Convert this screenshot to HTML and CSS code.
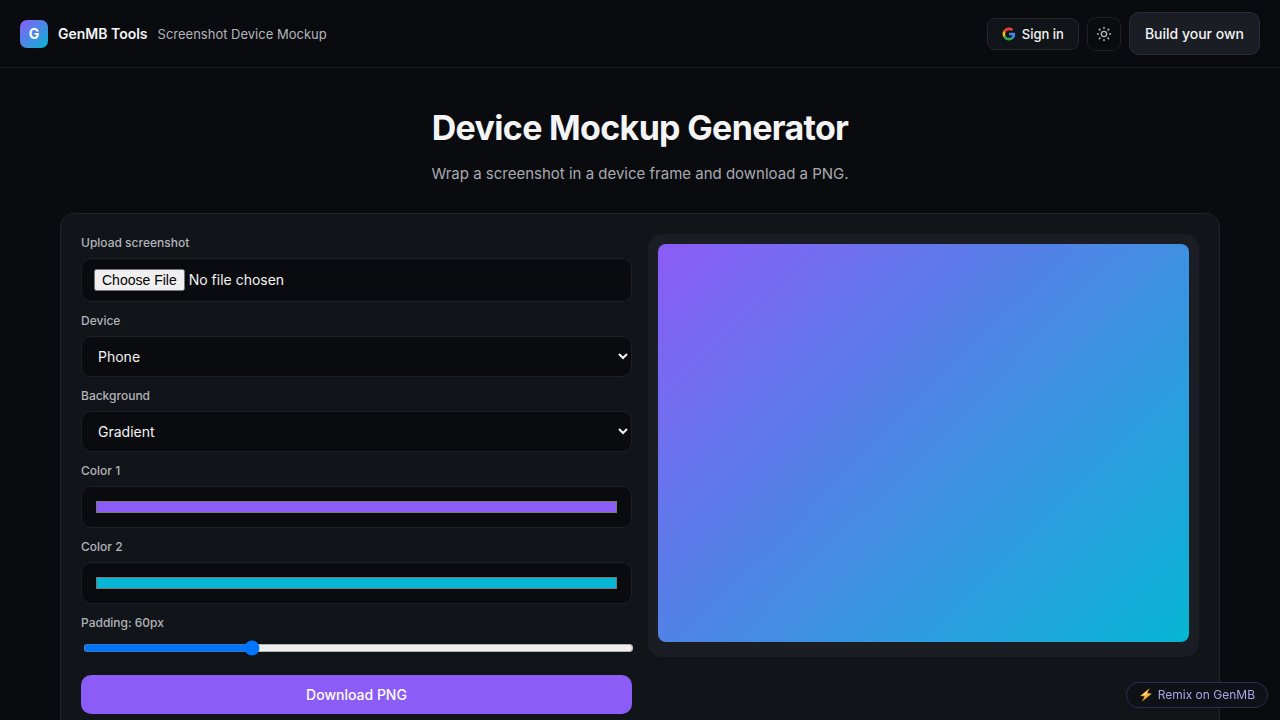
FILE: index.html
```html
<!DOCTYPE html>
<html lang="en">
<head>
    <meta charset="UTF-8">
    <meta name="viewport" content="width=device-width, initial-scale=1.0">
    <title>Device Mockup Generator</title>
    <link rel="stylesheet" href="styles.css">
</head>
<body>
    <header class="topbar">
        <div class="brand">
            <span class="logo">G</span>
            <span class="brand-name">GenMB Tools</span>
            <span class="tool-name">Screenshot Device Mockup</span>
        </div>
        <div class="actions">
            <button type="button" class="sign-in">
                <svg width="14" height="14" viewBox="0 0 24 24" aria-hidden="true">
                    <path fill="#4285F4" d="M22.56 12.25c0-.78-.07-1.53-.2-2.25H12v4.26h5.92c-.26 1.37-1.04 2.53-2.21 3.31v2.77h3.57c2.08-1.92 3.28-4.74 3.28-8.09z"/>
                    <path fill="#34A853" d="M12 23c2.97 0 5.46-.98 7.28-2.66l-3.57-2.77c-.98.66-2.23 1.06-3.71 1.06-2.86 0-5.29-1.93-6.16-4.53H2.18v2.84C3.99 20.53 7.7 23 12 23z"/>
                    <path fill="#FBBC05" d="M5.84 14.09c-.22-.66-.35-1.36-.35-2.09s.13-1.43.35-2.09V7.07H2.18C1.43 8.55 1 10.22 1 12s.43 3.45 1.18 4.93l3.66-2.84z"/>
                    <path fill="#EA4335" d="M12 5.38c1.62 0 3.06.56 4.21 1.64l3.15-3.15C17.45 2.09 14.97 1 12 1 7.7 1 3.99 3.47 2.18 7.07l3.66 2.84c.87-2.6 3.3-4.53 6.16-4.53z"/>
                </svg>
                Sign in
            </button>
            <button type="button" class="theme-toggle" aria-label="Toggle theme">
                <svg width="16" height="16" viewBox="0 0 16 16" fill="none" stroke="currentColor" aria-hidden="true">
                    <circle cx="8" cy="8" r="2.6" stroke-width="1.4"/>
                    <path stroke-width="1.6" stroke-linecap="round" d="M8 1.5v.7M8 13.8v.7M1.5 8h.7M13.8 8h.7M3.4 3.4l.5.5M12.1 12.1l.5.5M3.4 12.6l.5-.5M12.1 3.9l.5-.5"/>
                </svg>
            </button>
            <a href="#build" class="build-btn">Build your own</a>
        </div>
    </header>

    <main class="page">
        <h1>Device Mockup Generator</h1>
        <p class="lead">Wrap a screenshot in a device frame and download a PNG.</p>

        <section class="card">
            <form class="controls">
                <div class="field">
                    <label for="file">Upload screenshot</label>
                    <input type="file" id="file" class="input file-input" accept="image/*">
                </div>
                <div class="field">
                    <label for="device">Device</label>
                    <select id="device" class="input">
                        <option>Phone</option>
                        <option>Laptop</option>
                        <option>Browser</option>
                    </select>
                </div>
                <div class="field">
                    <label for="background">Background</label>
                    <select id="background" class="input">
                        <option>Gradient</option>
                        <option>Solid</option>
                    </select>
                </div>
                <div class="field">
                    <label for="color1">Color 1</label>
                    <input type="color" id="color1" class="input color-input" value="#8b5cf6">
                </div>
                <div class="field">
                    <label for="color2">Color 2</label>
                    <input type="color" id="color2" class="input color-input" value="#06b6d4">
                </div>
                <div class="field">
                    <label for="padding">Padding: 60px</label>
                    <input type="range" id="padding" class="range" min="0" max="200" value="60">
                </div>
                <button type="button" class="download-btn">Download PNG</button>
            </form>

            <div class="preview-col">
                <div class="preview">
                    <div class="canvas"></div>
                </div>
            </div>
        </section>
    </main>

    <a href="#remix" class="remix">
        <svg width="14" height="14" viewBox="0 0 13 13" aria-hidden="true">
            <path fill="#f9b233" d="M9.8.2 1.2 7.3l4 .7L2.6 12.8l9.2-7.4-4.1-.8z"/>
            <path fill="#ffe2a0" d="M8 2.3 3.6 6.3l3 .5z"/>
        </svg>
        Remix on GenMB
    </a>
</body>
</html>
```

FILE: styles.css
```css
* {
    box-sizing: border-box;
}

body {
    margin: 0;
    background-color: #0a0b0f;
    color: #f4f4f5;
    font-family: 'Inter', sans-serif;
    font-size: 14px;
    line-height: 20px;
}

button,
input,
select {
    font-family: inherit;
}

a {
    text-decoration: none;
}

/* Header */
.topbar {
    display: flex;
    justify-content: space-between;
    align-items: center;
    padding: 12px 20px;
    border-bottom: 1px solid #1b1c21;
}

.brand {
    display: flex;
    align-items: center;
    gap: 10px;
}

.logo {
    display: flex;
    align-items: center;
    justify-content: center;
    width: 28px;
    height: 28px;
    border-radius: 7px;
    background: linear-gradient(135deg, #8b5cf6, #06b6d4);
    color: #fff;
    font-weight: 700;
}

.brand-name {
    font-weight: 600;
}

.tool-name {
    color: #b4b5bb;
    font-size: 13px;
}

.actions {
    display: flex;
    align-items: center;
    gap: 8px;
}

.sign-in {
    display: flex;
    align-items: center;
    gap: 6px;
    height: 32px;
    padding: 0 14px;
    border: 1px solid #25272d;
    border-radius: 8px;
    background-color: #111418;
    color: #f4f4f5;
    font-size: 13px;
    font-weight: 500;
}

.theme-toggle {
    display: flex;
    align-items: center;
    justify-content: center;
    width: 34px;
    height: 34px;
    padding: 0;
    border: 1px solid #1d1f24;
    border-radius: 9px;
    background: none;
    color: #b4b5bb;
}

.build-btn {
    padding: 11px 15px 10px;
    border: 1px solid #2a2d35;
    border-radius: 10px;
    background-color: #1a1d24;
    color: #f4f4f5;
    font-weight: 500;
}

/* Page */
.page {
    max-width: 1200px;
    margin: 0 auto;
    padding: 38px 20px 60px;
}

h1 {
    margin: 0 0 13px;
    font-size: 34px;
    line-height: 44px;
    font-weight: 700;
    letter-spacing: -0.02em;
    text-align: center;
}

.lead {
    margin: 0 0 28px;
    color: #a9aab0;
    font-size: 15px;
    line-height: 22px;
    text-align: center;
}

.card {
    display: grid;
    grid-template-columns: 1fr 1fr;
    gap: 16px;
    padding: 20px;
    border: 1px solid #212329;
    border-radius: 14px;
    background-color: #111418;
}

/* Controls */
.controls {
    display: flex;
    flex-direction: column;
    gap: 10px;
}

.field {
    display: flex;
    flex-direction: column;
    gap: 6px;
}

.field label {
    color: #b4b5bb;
    font-size: 12px;
    line-height: 18px;
    font-weight: 500;
}

.input {
    width: 100%;
    height: 41px;
    padding: 10px 12px;
    border: 1px solid #1d1f24;
    border-radius: 10px;
    background-color: #0a0b0f;
    color: #f4f4f5;
    font-size: 14px;
}

.file-input {
    height: 44px;
}

.color-input {
    height: 42px;
}

.range {
    width: 100%;
    margin: 2px;
}

.download-btn {
    height: 39px;
    margin-top: 7px;
    border: none;
    border-radius: 10px;
    background-color: #8b5cf6;
    color: #fff;
    font-size: 14px;
    font-weight: 500;
}

/* Preview */
.preview {
    padding: 10px 10px 15px;
    border-radius: 14px;
    background-color: #1a1d24;
}

.canvas {
    aspect-ratio: 4 / 3;
    border-radius: 8px;
    background: linear-gradient(135deg, #8b5cf6, #06b6d4);
}

/* Floating link */
.remix {
    position: fixed;
    right: 12px;
    bottom: 12px;
    display: flex;
    align-items: center;
    gap: 5px;
    height: 26px;
    padding: 0 12px;
    border: 1px solid #2d2d54;
    border-radius: 13px;
    background-color: #0f1117;
    color: #a5a8e8;
    font-size: 12px;
}
```
